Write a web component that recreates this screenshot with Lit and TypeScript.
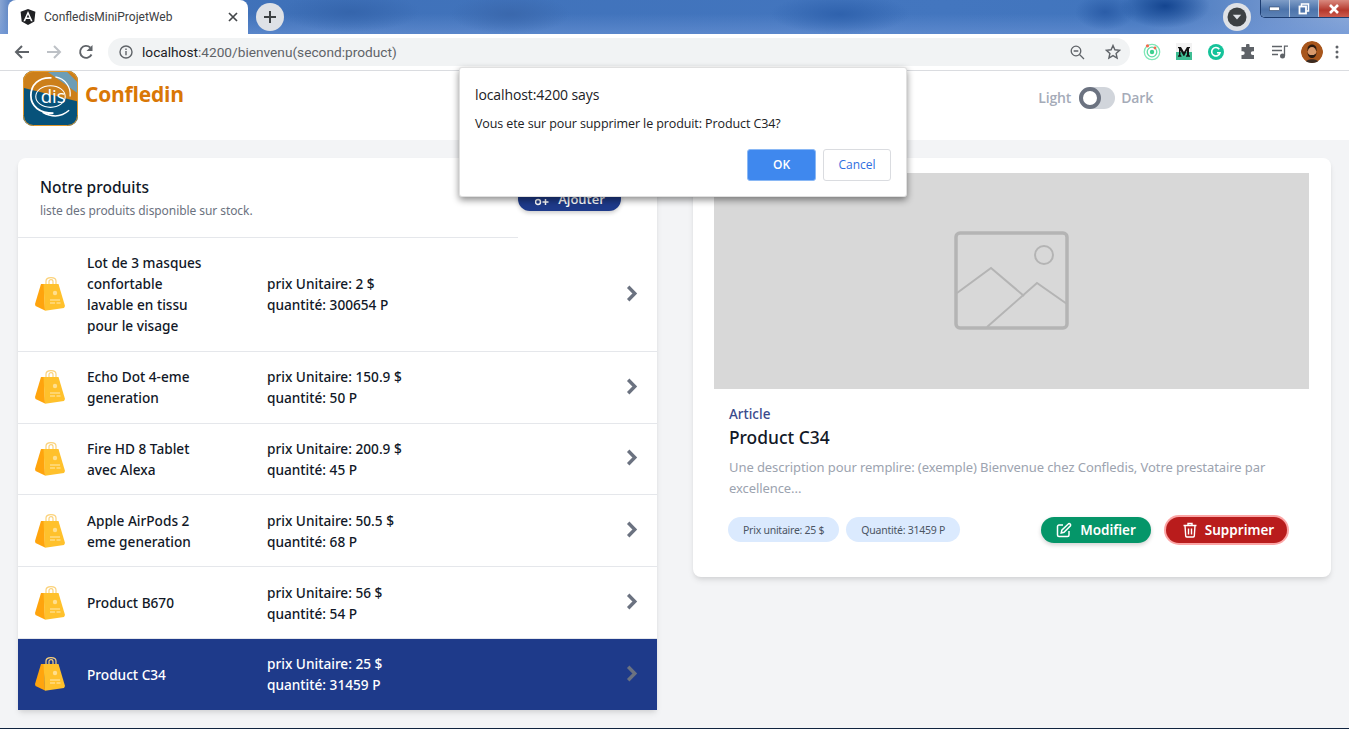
import { LitElement, html, css, svg } from "lit";
import { customElement } from "lit/decorators.js";

const products = [
  { name: ["Lot de 3 masques", "confortable", "lavable en tissu", "pour le visage"], price: "2 $", qty: "300654 P" },
  { name: ["Echo Dot 4-eme", "generation"], price: "150.9 $", qty: "50 P" },
  { name: ["Fire HD 8 Tablet", "avec Alexa"], price: "200.9 $", qty: "45 P" },
  { name: ["Apple AirPods 2", "eme generation"], price: "50.5 $", qty: "68 P" },
  { name: ["Product B670"], price: "56 $", qty: "54 P" },
  { name: ["Product C34"], price: "25 $", qty: "31459 P", active: true },
];

const bag = svg`<svg class="bag" viewBox="0 0 30 34" width="30" height="34">
  <path d="M11 9V4c0-4.500 10-4.500 10 0v5M14 9V4.500c0-2.500 4-2.500 4 0V9" fill="none" stroke="#fbd27a" stroke-width="1.200"/>
  <path d="M6 7 0 27l.5 2L10 33.500 9 7z" fill="#ffa40d"/>
  <path d="M8.500 7H23.500L30 29l-1 2-19 2.800z" fill="#ffc12c"/>
  <circle cx="20" cy="16" r="2.200" fill="#ffdf8f"/>
  <path d="M15 23h10M15 26h5M21.500 26h4" stroke="#ffedc0" stroke-width=".9"/>
</svg>`;

const chevron = svg`<svg class="chev" viewBox="0 0 12 17" width="12" height="17"><path d="M2.200 1.800 8.800 8.500l-6.600 6.700" fill="none" stroke="#6b7280" stroke-width="3.400"/></svg>`;

@customElement("browser-chrome")
class BrowserChrome extends LitElement {
  static styles = css`
    :host { display: block; font-family: Roboto, sans-serif; }
    .strip {
      height: 34px; display: flex; align-items: flex-end; padding-left: 8px; position: relative;
      background:
        radial-gradient(ellipse 45px 22px at 1165px 6px, #144590 0, transparent 100%),
        radial-gradient(ellipse 30px 18px at 1105px 12px, #2b5da8 0, transparent 100%),
        radial-gradient(ellipse 70px 20px at 840px 14px, #2f62ad 0, transparent 100%),
        radial-gradient(ellipse 60px 20px at 510px 14px, #3a68ad 0, transparent 100%),
        radial-gradient(ellipse 70px 20px at 350px 12px, #3565ac 0, transparent 100%),
        linear-gradient(180deg, rgba(66,113,184,0) 40%, rgba(110,150,215,.55) 100%),
        linear-gradient(90deg, #88a5d3 0, #4d79bd 1%, #3f71b9 20%, #4376bf 70%, #4175bd 85%, #6e93cd 94%, #8aa8d8 100%);
    }
    .tab {
      width: 240px; height: 34px; background: #fff; border-radius: 8px 8px 0 0;
      display: flex; align-items: center; box-sizing: border-box; padding: 0 10px 0 12px; gap: 8px;
      font-size: 12px; color: #3c4043;
    }
    .tab span { flex: 1; }
    .plus {
      width: 28px; height: 28px; border-radius: 50%; background: #dee1e6; margin: 0 0 3px 8px;
      display: flex; align-items: center; justify-content: center;
    }
    .spacer { flex: 1; }
    .profile {
      width: 28px; height: 28px; border-radius: 50%; background: #dee1e6; margin: 0 9px 3px 0;
      display: flex; align-items: center; justify-content: center; align-self: flex-end;
    }
    .win {
      display: flex; align-self: flex-start; height: 18px; width: 89px;
      border: 1px solid #1c3c70; border-top: 0; border-right: 0; border-radius: 0 0 0 5px; overflow: hidden;
      box-sizing: border-box; box-shadow: inset 0 0 0 1px rgba(255,255,255,.55);
    }
    .win div { display: flex; align-items: center; justify-content: center; }
    .min, .max { width: 28px; background: linear-gradient(#7f9dc7, #4d74ab 55%, #5d82b5); border-right: 1px solid #b8c9e0; }
    .close { flex: 1; background: linear-gradient(#d98a7f, #b5382c 60%, #cc5b4e); }
    .bar {
      background: #fff; display: flex; align-items: center; box-sizing: border-box;
      border-bottom: 1px solid #dadce0; height: 37px; position: relative; overflow: hidden;
    }
    .nav { width: 30px; margin-left: 2px; display: flex; justify-content: center; }
    .nav.first { margin-left: 7px; }
    .url {
      margin-left: 7px; width: 1022px; height: 28px; border-radius: 14px; background: #f1f3f4;
      display: flex; align-items: center; box-sizing: border-box; padding: 0 9px 0 11px; gap: 9px;
      font-size: 13.700px; color: #5f6368;
    }
    .url b { font-weight: 400; color: #202124; }
    .url .addr { flex: 1; }
    .star { margin-left: 11px; }
    .exts { display: flex; align-items: center; margin-left: 6px; }
    .exts > * { flex: none; }
    .ext { width: 32px; display: flex; justify-content: center; }
    .avatar { width: 22px; height: 22px; border-radius: 50%; margin-left: 5px; }
    .dots { margin-left: 12px; }
  `;
  render() {
    return html`
      <div class="strip">
        <div class="tab">
          <svg width="16" height="16" viewBox="0 0 16 16">
            <path d="M8 0 .6 2.700l1.100 9.800L8 16l6.300-3.500 1.100-9.800z" fill="#202124"/>
            <path d="M8 2 3.400 12.300h1.700l.9-2.300h4l.9 2.300h1.700zM9.300 8.600H6.700L8 5.400z" fill="#fff"/>
          </svg>
          <span>ConfledisMiniProjetWeb</span>
          <svg width="10" height="10" viewBox="0 0 10 10"><path d="M1 1l8 8M9 1 1 9" stroke="#44474a" stroke-width="1.700"/></svg>
        </div>
        <div class="plus">
          <svg width="14" height="14" viewBox="0 0 14 14"><path d="M7 1v12M1 7h12" stroke="#3c4043" stroke-width="2"/></svg>
        </div>
        <div class="spacer"></div>
        <div class="profile">
          <svg width="20" height="20" viewBox="0 0 20 20"><circle cx="10" cy="10" r="9.500" fill="#3c4043"/><path d="M5.800 7.800h8.400L10 12.600z" fill="#dee1e6"/></svg>
        </div>
        <div class="win">
          <div class="min"><svg width="12" height="6" viewBox="0 0 12 6"><rect x=".5" y="1" width="10" height="3.500" fill="#fff" stroke="#2c4468" stroke-width=".6"/></svg></div>
          <div class="max"><svg width="12" height="12" viewBox="0 0 12 12"><path d="M3.500 3V1h7v7H8.500" fill="none" stroke="#fff" stroke-width="1.500"/><rect x="1.500" y="3.500" width="6.500" height="7" fill="none" stroke="#fff" stroke-width="1.800"/></svg></div>
          <div class="close"><svg width="12" height="10" viewBox="0 0 12 10"><path d="M2 1l8 8M10 1 2 9" stroke="#fff" stroke-width="2.600"/></svg></div>
        </div>
      </div>
      <div class="bar">
        <div class="nav first"><svg width="16" height="16" viewBox="0 0 16 16"><path d="M15 8H2M8 2 2 8l6 6" fill="none" stroke="#5f6368" stroke-width="2"/></svg></div>
        <div class="nav"><svg width="16" height="16" viewBox="0 0 16 16"><path d="M1 8h13M8 2l6 6-6 6" fill="none" stroke="#bdc1c6" stroke-width="2"/></svg></div>
        <div class="nav"><svg width="16" height="16" viewBox="0 0 16 16"><path d="M13.500 10.500A6 6 0 1 1 12.200 3.500" fill="none" stroke="#5f6368" stroke-width="1.900"/><path d="M14.500 1v6h-6z" fill="#5f6368"/></svg></div>
        <div class="url">
          <svg width="14" height="14" viewBox="0 0 14 14"><circle cx="7" cy="7" r="6" fill="none" stroke="#5f6368" stroke-width="1.400"/><path d="M7 6v4.200M7 3.500v1.400" stroke="#5f6368" stroke-width="1.400"/></svg>
          <span class="addr"><b>localhost</b>:4200/bienvenu(second:product)</span>
          <svg width="15" height="15" viewBox="0 0 15 15"><circle cx="6" cy="6" r="4.800" fill="none" stroke="#5f6368" stroke-width="1.300"/><path d="M3.700 6h4.600M9.500 9.500 14 14" stroke="#5f6368" stroke-width="1.300"/></svg>
          <svg class="star" width="16" height="16" viewBox="0 0 16 16"><path d="m8 1.500 1.900 4.300 4.700.5-3.500 3.100 1 4.600L8 11.600l-4.100 2.400 1-4.600L1.400 6.300l4.700-.5z" fill="none" stroke="#5f6368" stroke-width="1.400"/></svg>
        </div>
        <div class="exts">
          <div class="ext"><svg width="18" height="18" viewBox="0 0 18 18"><circle cx="9" cy="9" r="7.700" fill="none" stroke="#7fe8b8" stroke-width="1.300"/><circle cx="9" cy="9" r="4.800" fill="none" stroke="#5fdca5" stroke-width="1.300"/><circle cx="9" cy="9" r="2.200" fill="#3dcf90"/><circle cx="4.500" cy="2.800" r="1.600" fill="#f26b4e"/><circle cx="12" cy="5" r="1.400" fill="#f26b4e"/></svg></div>
          <div class="ext"><svg width="18" height="18" viewBox="0 0 18 18"><rect y="0" width="16" height="16" x="1" fill="#f2f2f2"/><rect y="9" width="16" height="8" x="1" fill="#3ebd93"/><path d="M3 4h3l3 5 3-5h3v1l-1 .6v6.500l1 .6v1h-4v-1l1-.6V7.500L9.200 13H8.600L5.500 7.500v4.600l1 .6v1H3v-1l1-.6V5.600L3 5z" fill="#111"/></svg></div>
          <div class="ext"><svg width="16" height="16" viewBox="0 0 16 16"><circle cx="8" cy="8" r="8" fill="#15c39a"/><path d="M11.300 5.300A4.200 4.200 0 1 0 12 8.700H9" fill="none" stroke="#fff" stroke-width="1.600"/></svg></div>
          <div class="ext"><svg width="16" height="16" viewBox="0 0 16 16"><path d="M6 1.500a1.800 1.800 0 0 1 3.600 0V3H14v4.200h-1.300a1.900 1.900 0 0 0 0 3.800H14v4H1.500v-4h1.300a1.900 1.900 0 0 0 0-3.800H1.500V3H6z" fill="#5f6368"/></svg></div>
          <div class="ext"><svg width="16" height="14" viewBox="0 0 16 14"><path d="M0 1.500h10M0 5.500h10M0 9.500h6" stroke="#5f6368" stroke-width="1.300"/><path d="M12.500 11V1.200H16" fill="none" stroke="#5f6368" stroke-width="1.300"/><circle cx="10.500" cy="11" r="2.500" fill="#5f6368"/></svg></div>
          <svg class="avatar" viewBox="0 0 22 22"><circle cx="11" cy="11" r="11" fill="#a8561c"/><path d="M6.500 8c0-6 9-6 9 0v2h-9z" fill="#2b1a10"/><ellipse cx="11" cy="11" rx="4.200" ry="5" fill="#d99a6c"/><path d="M6.500 11c0 8 9 8 9 0-1 3-2 3-4.500 3s-3.500 0-4.500-3z" fill="#2b1a10"/><path d="M4 22c1-5 13-5 14 0z" fill="#3b2a20"/></svg>
          <svg class="dots" width="4" height="14" viewBox="0 0 4 14"><circle cx="2" cy="2" r="1.500" fill="#5f6368"/><circle cx="2" cy="7" r="1.500" fill="#5f6368"/><circle cx="2" cy="12" r="1.500" fill="#5f6368"/></svg>
        </div>
      </div>
    `;
  }
}

@customElement("app-root")
class AppRoot extends LitElement {
  static styles = css`
    :host {
      display: flex; flex-direction: column; height: 729px; width: 1349px; overflow: hidden; position: relative;
      background: #f3f4f6; font-family: "Noto Sans", "Open Sans", sans-serif;
    }
    .top {
      height: 69px; background: #fff; display: flex; box-sizing: border-box; padding: 0 0 0 23px; flex: none;
      align-items: flex-start;
    }
    .brand { color: #d97706; font-size: 21px; font-weight: 700; margin: 8px 0 0 7px; line-height: 30px; letter-spacing: -.2px; font-family: "Open Sans", sans-serif; }
    .mode {
      margin-left: auto; margin-right: 196px; margin-top: 16px; display: flex; align-items: center; gap: 8px; height: 22px;
      font-size: 14px; font-weight: 600; color: #a5abb8; font-family: "Open Sans", sans-serif; letter-spacing: -.15px;
    }
    .mode span { margin-bottom: 2px; }
    .mode .dark { margin-left: -2px; }
    .track { width: 36px; height: 22px; border-radius: 11px; background: #d1d5db; position: relative; }
    .knob { position: absolute; left: 0; top: 0; width: 22px; height: 22px; border-radius: 50%; background: #fff; border: 4px solid #6b7280; box-sizing: border-box; }
    main {
      flex: 1; display: grid; grid-template-columns: 639px 638px; gap: 36px; padding: 18px 18px 0; align-items: start;
    }
    .card { background: #fff; border-radius: 8px; box-shadow: 0 4px 6px -1px rgba(0,0,0,.1), 0 2px 4px -1px rgba(0,0,0,.06); }
    .list { overflow: hidden; border-radius: 8px 8px 0 0; }
    .list-head { display: flex; height: 80px; }
    .titles { width: 500px; box-sizing: border-box; padding: 17px 0 0 22px; border-bottom: 1px solid #e5e7eb; }
    h2 { margin: 0; font-size: 15.500px; font-weight: 500; line-height: 24px; color: #111827; }
    .titles p { margin: 2px 0 0; font-size: 12px; line-height: 20px; color: #6b7280; letter-spacing: -.07px; }
    .add {
      margin-top: 29px; width: 103px; height: 24px; border: 0; border-radius: 12px; background: #1e3a8a; color: #fff;
      font: 600 13px "Open Sans", sans-serif; display: flex; align-items: center; justify-content: center; gap: 8px;
      box-shadow: 0 2px 4px rgba(0,0,0,.2); padding: 0 0 0 1px;
    }
    .add svg { margin-top: 6px; }
    .row {
      display: flex; align-items: center; padding: 14.400px 19px 14.400px 17px; border-bottom: 1px solid #e5e7eb;
      font-size: 13.650px; line-height: 21px; font-weight: 500; color: #111827;
    }
    .row.active { background: #1e3a8a; color: #fff; border-bottom: 0; }
    .bag { flex: none; }
    .name { margin-left: 22px; width: 180px; flex: none; }
    .price { flex: 1; }
    .name div, .price div { white-space: nowrap; }
    .chev { flex: none; margin-top: -2px; }
    .detail { padding: 15px 22px 0 21px; height: 419px; box-sizing: border-box; }
    .ph { height: 216px; background: #d8d8d8; display: flex; align-items: center; justify-content: center; }
    .info { padding: 16px 0 0 15px; }
    .kicker { font-size: 13.500px; font-weight: 500; color: #3b4a8c; line-height: 18px; }
    .pname { font-size: 17.400px; font-weight: 500; color: #111827; line-height: 26px; margin-top: 1px; }
    .desc { margin: 7px 0 0; font-size: 13px; line-height: 21px; color: #9ca3af; width: 560px; letter-spacing: -.08px; }
    .foot { display: flex; align-items: flex-start; margin: 18px 0 0 -1px; }
    .pill { height: 25px; border-radius: 13px; background: #dbeafe; color: #4b5563; font-size: 10.500px; display: flex; align-items: center; padding: 0 15px; margin-right: 7px; letter-spacing: -.25px; }
    .btn {
      height: 26px; border: 0; border-radius: 13px; color: #fff; font: 600 13.500px "Noto Sans", sans-serif;
      display: flex; align-items: center; justify-content: center; gap: 8px; box-shadow: 0 2px 4px rgba(0,0,0,.18); padding: 0;
    }
    .edit { width: 110px; background: #059669; margin-left: auto; }
    .del { width: 121px; background: #b91c1c; margin: 0 22px 0 15px; box-shadow: 0 0 0 2px #fca5a5; padding-left: 4px; }
    .edge { height: 1px; background: #10233f; flex: none; }
    .dialog {
      position: absolute; left: 459px; top: 67px; width: 448px; height: 130px; box-sizing: border-box; background: #fff;
      border-radius: 3px; box-shadow: 0 0 0 1px rgba(0,0,0,.12) inset, 0 3px 7px rgba(0,0,0,.45);
      padding: 18px 16px 0; color: #202124; font-family: "Open Sans", sans-serif;
    }
    .dialog h3 { margin: 0; font-size: 14px; font-weight: 400; line-height: 20px; letter-spacing: -.1px; }
    .dialog p { margin: 10px 0 0; font-size: 12.500px; line-height: 18px; letter-spacing: -.1px; }
    .acts { display: flex; justify-content: flex-end; gap: 7px; margin-top: 16px; }
    .acts button { width: 69px; height: 32px; border-radius: 3px; font: 600 12px "Open Sans", sans-serif; box-sizing: border-box; padding: 0 0 2px; }
    .acts .ok { background: #3f88ee; border: 1px solid #8ab8f5; color: #fff; }
    .acts .cancel { background: #fff; border: 1px solid #dadce0; color: #2f6fe0; width: 68px; font-weight: 500; }
  `;

  render() {
    return html`
      <browser-chrome></browser-chrome>
      <header class="top">
        <svg width="55" height="55" viewBox="0 0 56 56">
          <defs><clipPath id="lg"><rect width="56" height="56" rx="10"/></clipPath></defs>
          <g clip-path="url(#lg)">
            <rect width="56" height="56" fill="#07527a"/>
            <path d="M0 0H56V31L0 17z" fill="#cc7f1a"/>
            <path d="M24 0H44L56 12V23z" fill="#6d9db5"/>
            <path d="M29 7C16 6 8 14 8 25c0 11 9 18 23 18" fill="none" stroke="#fff" stroke-width="1.800"/>
            <path d="M33 6c10 2 16 10 15 20" fill="none" stroke="#fff" stroke-width="1.300"/>
            <path d="M20 42c9 5 19 5 27-2" fill="none" stroke="#fff" stroke-width="1.500"/>
            <ellipse cx="28" cy="26" rx="15" ry="11" fill="none" stroke="#fff" stroke-width="1.100"/>
            <text x="18" y="33" font-family="Open Sans" font-size="19" fill="#fff">dis</text>
          </g>
          <rect x=".5" y=".5" width="55" height="55" rx="10" fill="none" stroke="#e59a2a"/>
        </svg>
        <div class="brand">Confledin</div>
        <div class="mode"><span>Light</span><div class="track"><div class="knob"></div></div><span class="dark">Dark</span></div>
      </header>
      <main>
        <section class="card list">
          <div class="list-head">
            <div class="titles">
              <h2>Notre produits</h2>
              <p>liste des produits disponible sur stock.</p>
            </div>
            <button class="add">
              <svg width="15" height="8" viewBox="0 0 15 8"><circle cx="3" cy="4" r="2.500" fill="none" stroke="#fff" stroke-width="1.500"/><path d="M10.500 1v6M7.500 4h6" stroke="#fff" stroke-width="1.500"/></svg>
              Ajouter
            </button>
          </div>
          ${products.map(
            (p) => html`<div class="row ${p.active ? "active" : ""}">
              ${bag}
              <div class="name">${p.name.map((n) => html`<div>${n}</div>`)}</div>
              <div class="price"><div>prix Unitaire: ${p.price}</div><div>quantité: ${p.qty}</div></div>
              ${chevron}
            </div>`
          )}
        </section>
        <section class="card detail">
          <div class="ph">
            <svg width="116" height="100" viewBox="0 0 116 100" fill="none" stroke="#b4b4b4">
              <rect x="2" y="2" width="111" height="95" rx="4" stroke-width="3.500"/>
              <circle cx="90" cy="24" r="9" stroke-width="2"/>
              <path d="M3 62 37 37 70 65" stroke-width="2"/>
              <path d="M33 96 83 52l30 21" stroke-width="2"/>
            </svg>
          </div>
          <div class="info">
            <div class="kicker">Article</div>
            <div class="pname">Product C34</div>
            <p class="desc">Une description pour remplire: (exemple) Bienvenue chez Confledis, Votre prestataire par excellence...</p>
            <div class="foot">
              <span class="pill">Prix unitaire: 25 $</span>
              <span class="pill">Quantité: 31459 P</span>
              <button class="btn edit">
                <svg width="16" height="16" viewBox="0 0 16 16" fill="none" stroke="#fff" stroke-width="1.500"><path d="M7 3H3a1.500 1.500 0 0 0-1.500 1.500v8.500A1.500 1.500 0 0 0 3 14.500h8.500A1.500 1.500 0 0 0 13 13V9"/><path d="M12.500 1.800a1.500 1.500 0 0 1 2 2L8 10.300l-2.800.6.600-2.800z"/></svg>
                Modifier
              </button>
              <button class="btn del">
                <svg width="14" height="16" viewBox="0 0 14 16" fill="none" stroke="#fff" stroke-width="1.400"><path d="M.5 3.500h13M5 3.500V1.500h4v2M2 3.500l.7 10.500a1.300 1.300 0 0 0 1.300 1h6a1.300 1.300 0 0 0 1.300-1L12 3.500M5.500 6.500v6M8.500 6.500v6"/></svg>
                Supprimer
              </button>
            </div>
          </div>
        </section>
      </main>
      <div class="edge"></div>
      <div class="dialog" role="dialog">
        <h3>localhost:4200 says</h3>
        <p>Vous ete sur pour supprimer le produit: Product C34?</p>
        <div class="acts">
          <button class="ok">OK</button>
          <button class="cancel">Cancel</button>
        </div>
      </div>
    `;
  }
}
